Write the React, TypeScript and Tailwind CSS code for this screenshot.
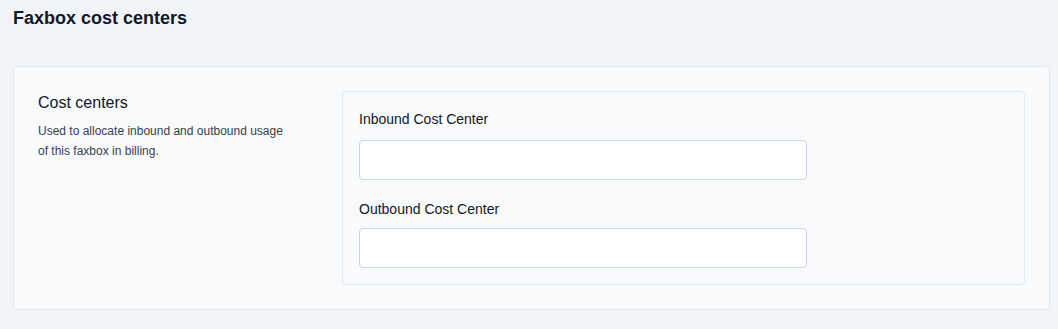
export default function App() {
  return (
    <div
      className="min-h-[329px] w-full bg-[#f1f5f9] pl-[13px] pr-2 pt-1 text-[#111827]"
      style={{ fontFamily: '"Liberation Sans", Arial, sans-serif' }}
    >
      <h1 className="text-[18px] font-bold leading-7">Faxbox cost centers</h1>
      <div className="mt-[34px] rounded-[4px] border border-[#e2e8f0] bg-[#f8fafc] p-6">
        <div className="flex gap-12">
          <div className="w-64 shrink-0">
            <h2 className="text-[16px] leading-6 text-[#111827]">Cost centers</h2>
            <p className="mt-1.5 text-[12px] leading-5 text-[#374151]">
              Used to allocate inbound and outbound usage of this faxbox in billing.
            </p>
          </div>
          <div className="flex-1 rounded-[4px] border border-[#e2e8f0] bg-[#f8fafc] px-4 pt-[17px] pb-4">
            <label className="block text-[14px] leading-5 text-[#111827]">Inbound Cost Center</label>
            <input
              type="text"
              className="mt-[11px] block h-10 w-full max-w-[448px] rounded-[4px] border border-[#cbd5e1] bg-white px-3 text-[14px] outline-none"
            />
            <label className="mt-[19px] block text-[14px] leading-5 text-[#111827]">Outbound Cost Center</label>
            <input
              type="text"
              className="mt-[9px] block h-10 w-full max-w-[448px] rounded-[4px] border border-[#cbd5e1] bg-white px-3 text-[14px] outline-none"
            />
          </div>
        </div>
      </div>
    </div>
  );
}
